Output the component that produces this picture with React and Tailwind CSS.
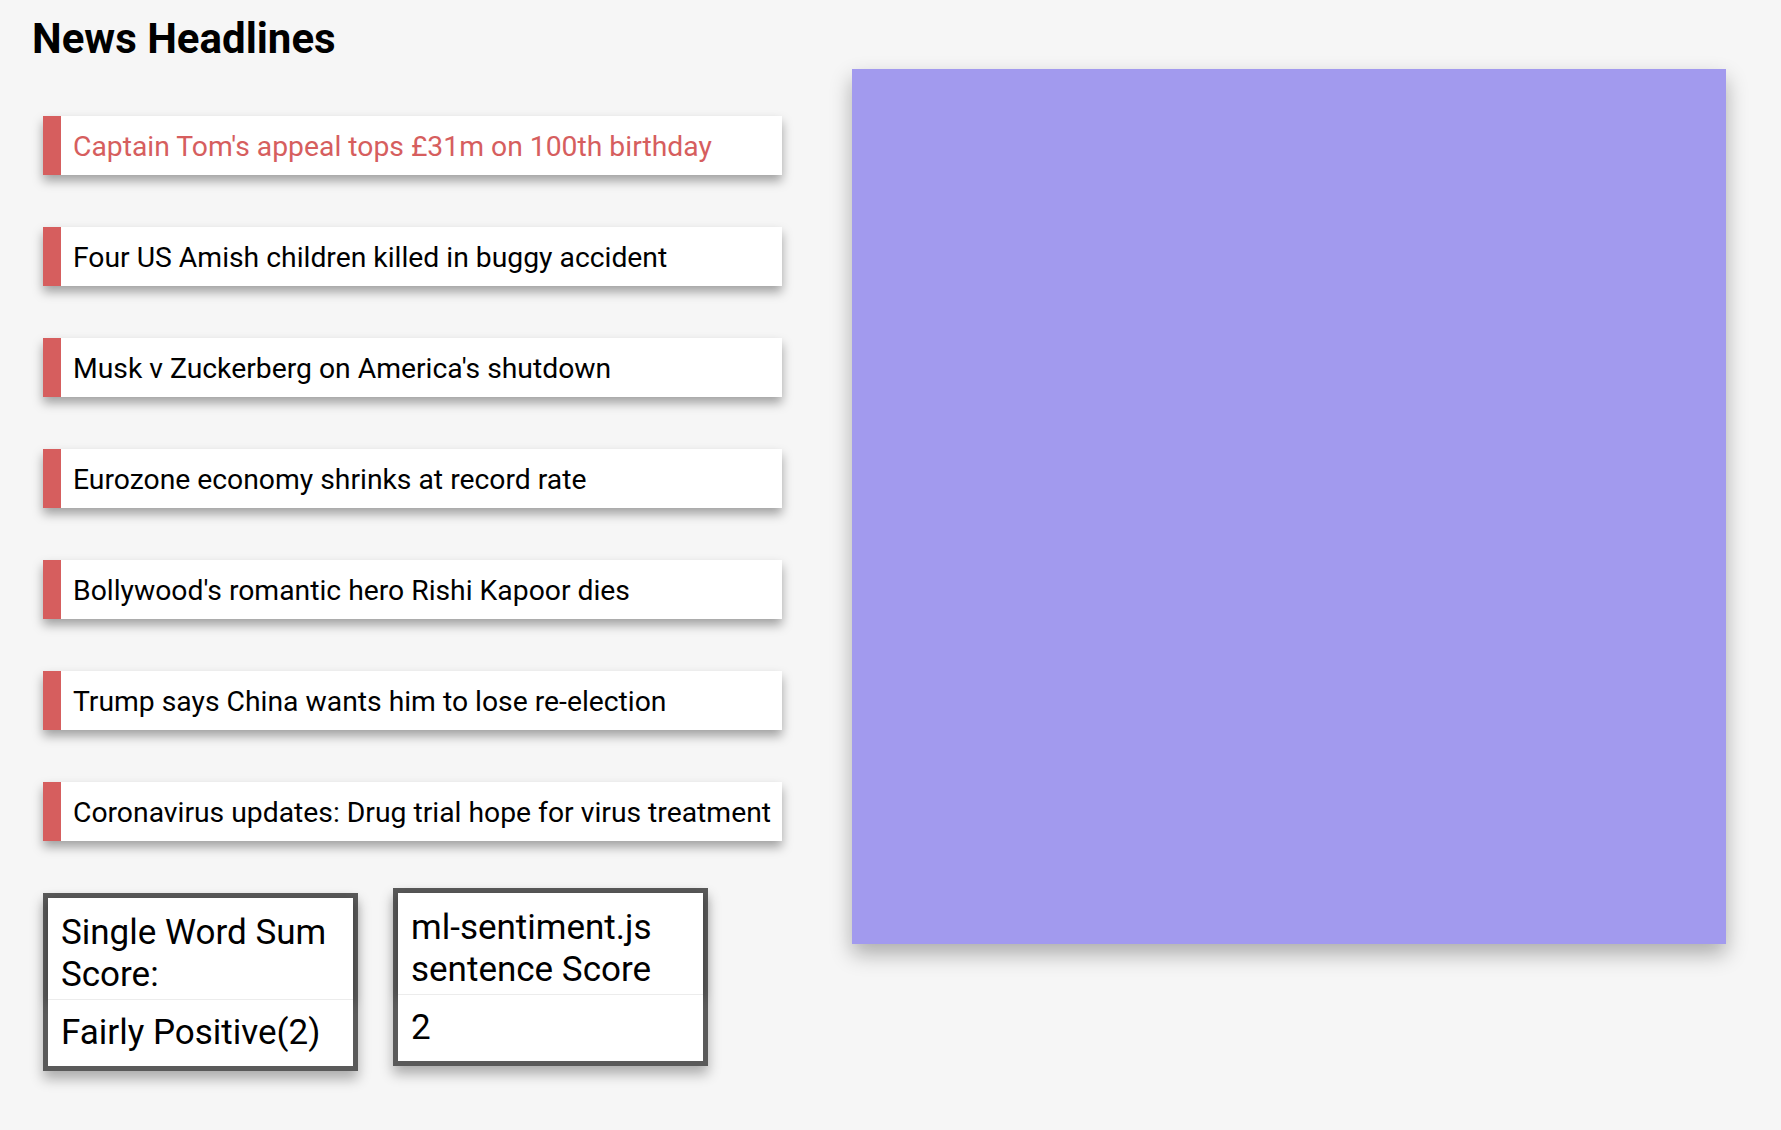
import React from "react";

const headlines = [
  "Captain Tom's appeal tops £31m on 100th birthday",
  "Four US Amish children killed in buggy accident",
  "Musk v Zuckerberg on America's shutdown",
  "Eurozone economy shrinks at record rate",
  "Bollywood's romantic hero Rishi Kapoor dies",
  "Trump says China wants him to lose re-election",
  "Coronavirus updates: Drug trial hope for virus treatment",
];

const ScoreBox = ({ title, value, className }) => (
  <div
    className={
      "w-[315px] border-[5px] border-[#5a5a5a] bg-white shadow-[0_8px_12px_rgba(0,0,0,0.3)] " +
      className
    }
  >
    <div className="relative bg-white px-[13px] pt-[14px] pb-[3px] text-[35px] leading-[41.7px] whitespace-nowrap shadow-[0_3px_10px_rgba(0,0,0,0.35)] border-b border-[#ececec]">
      {title}
    </div>
    <div className="relative bg-white px-[13px] pt-[12px] pb-[13px] text-[35px] leading-[41.7px] whitespace-nowrap">
      {value}
    </div>
  </div>
);

export default function App() {
  const selected = 0;

  return (
    <div className="min-h-[1130px] w-full bg-[#f6f6f6] font-['Roboto',sans-serif] text-black">
      <div className="flex">
        <div className="w-[782px] shrink-0">
          <h1 className="pl-[32px] pt-[14px] text-[42px] font-bold leading-[1.17]">News Headlines</h1>

          <ul className="mt-[53px] ml-[43px] flex flex-col gap-[52px]">
            {headlines.map((h, i) => (
              <li
                key={i}
                className="flex h-[59px] items-center bg-white shadow-[0_6px_10px_rgba(0,0,0,0.35)]"
              >
                <span className="h-full w-[18px] shrink-0 bg-[#d65e5e]" />
                <span
                  className={
                    "pl-[12px] pt-[3px] text-[28.3px] whitespace-nowrap " +
                    (i === selected ? "text-[#d65e5e]" : "text-black")
                  }
                >
                  {h}
                </span>
              </li>
            ))}
          </ul>

          <div className="mt-[47px] ml-[43px] flex items-start gap-[35px]">
            <ScoreBox
              className="mt-[5px]"
              title={
                <>
                  Single Word Sum
                  <br />
                  Score:
                </>
              }
              value="Fairly Positive(2)"
            />
            <ScoreBox
              className=""
              title={
                <>
                  ml-sentiment.js
                  <br />
                  sentence Score
                </>
              }
              value="2"
            />
          </div>
        </div>

        <div className="ml-[70px] mt-[69px] h-[875px] w-[874px] shrink-0 bg-[#a29aee] shadow-[0_10px_20px_rgba(0,0,0,0.3)]" />
      </div>
    </div>
  );
}
